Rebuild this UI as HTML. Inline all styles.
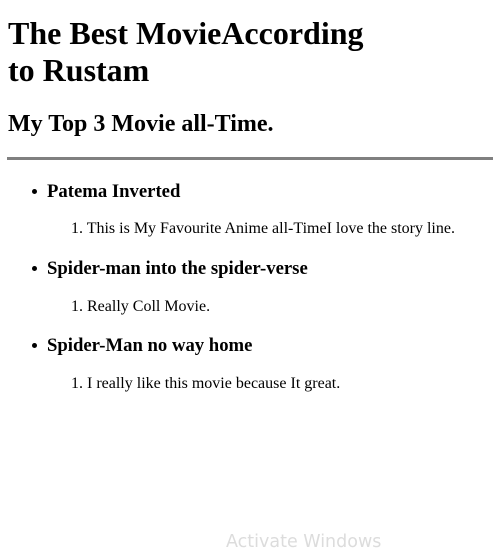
<html><head><style>
body{margin:0;width:493px;height:543px;overflow:hidden;background:#fff;font-family:"Liberation Serif",serif;color:#000;position:relative}
.a{position:absolute;white-space:nowrap;margin:0}
h1{font-size:32px;line-height:37px;font-weight:bold}
h2{font-size:24px;line-height:28px;font-weight:bold}
.b{font-size:18.7px;line-height:22px;font-weight:bold}
.s{font-size:16px;line-height:18px}
.dot{position:absolute;width:5px;height:5px;border-radius:50%;background:#000}
</style></head><body>
<h1 class="a" style="left:8px;top:15px">The Best MovieAccording<br>to Rustam</h1>
<h2 class="a" style="left:8px;top:110px">My Top 3 Movie all-Time.</h2>
<div class="a" style="left:7px;top:157px;width:486px;height:3px;background:#808080"></div>
<div class="dot" style="left:32px;top:189px"></div>
<div class="a b" style="left:47px;top:181px">Patema Inverted</div>
<div class="a s" style="left:71px;top:220px">1. This is My Favourite Anime all-TimeI love the story line.</div>
<div class="dot" style="left:32px;top:266px"></div>
<div class="a b" style="left:47px;top:258px">Spider-man into the spider-verse</div>
<div class="a s" style="left:71px;top:298px">1. Really Coll Movie.</div>
<div class="dot" style="left:32px;top:343px"></div>
<div class="a b" style="left:47px;top:335px">Spider-Man no way home</div>
<div class="a s" style="left:71px;top:375px">1. I really like this movie because It great.</div>
<div class="a" style="left:226px;top:532px;font-family:'DejaVu Sans',sans-serif;font-size:17.5px;color:#dcdcdc">Activate Windows</div>
</body></html>
